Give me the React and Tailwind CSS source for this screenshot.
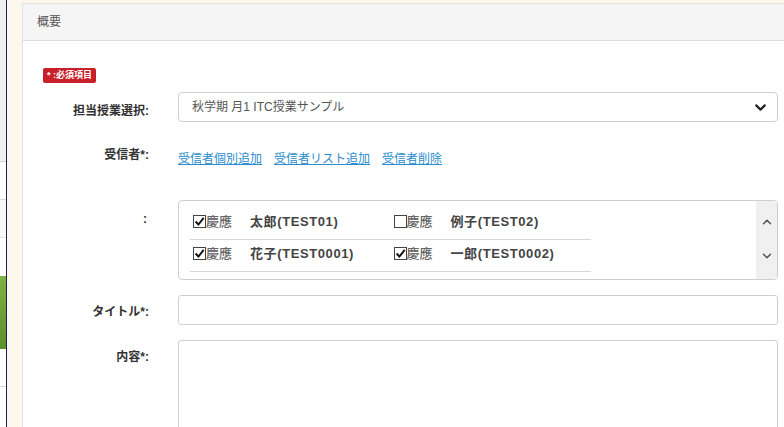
import { ChevronDown, ChevronUp } from 'lucide-react'

const FONT = { fontFamily: '"Liberation Sans", "Noto Sans CJK JP", sans-serif' }

const RECIPIENTS = [
  [
    { checked: true, name: '太郎', id: '(TEST01)' },
    { checked: false, name: '例子', id: '(TEST02)' },
  ],
  [
    { checked: true, name: '花子', id: '(TEST0001)' },
    { checked: true, name: '一郎', id: '(TEST0002)' },
  ],
  [
    { checked: true, name: '次郎', id: '(TEST0003)' },
    { checked: true, name: '三郎', id: '(TEST0004)' },
  ],
]

function CheckBox({ checked }) {
  return (
    <span className="w-[13px] h-[13px] border border-[#444] bg-white flex items-center justify-center flex-shrink-0">
      {checked && (
        <svg width="11" height="11" viewBox="0 0 10 10">
          <path d="M1.5 5 L4 7.8 L8.8 1.8" fill="none" stroke="#111" strokeWidth="1.8" />
        </svg>
      )}
    </span>
  )
}

function Recipient({ r }) {
  return (
    <div className="w-[201px] flex items-center pl-[3px]">
      <CheckBox checked={r.checked} />
      <span className="text-[#666] text-[13px] font-medium">慶應</span>
      <span className="text-[#444] text-[13px] font-bold ml-[18px] tracking-[0.6px]">
        {r.name}{r.id}
      </span>
    </div>
  )
}

function Sidebar() {
  return (
    <div className="w-[6px] flex-shrink-0 flex flex-col bg-white">
      <div className="h-[162px] bg-[#f0f0f0] border-b border-[#d8d8d8]" />
      <div className="h-[38px] border-b border-[#d8d8d8]" />
      <div className="h-[38px] border-b border-[#e0e0e0] bg-[#f7f7f7]" />
      <div className="h-[38px]" />
      <div className="h-[73px] bg-gradient-to-b from-[#7cb342] to-[#5d8f2a]" />
      <div className="h-[38px] border-b border-[#d8d8d8]" />
      <div className="flex-1" />
    </div>
  )
}

export default function App() {
  return (
    <div className="w-[784px] h-[427px] overflow-hidden flex bg-[#fdf8ee]" style={FONT}>
      <Sidebar />
      <div className="w-[1px] bg-[#1c2350] flex-shrink-0" />
      <div className="w-[15px] flex-shrink-0" />

      <div className="flex-1 mt-[3px] bg-white border-l border-t border-[#e2e2e2] flex flex-col min-w-0">
        {/* Header */}
        <div className="h-[37px] bg-[#f5f5f5] border-b border-[#dcdcdc] flex items-center pl-[14px] flex-shrink-0">
          <span className="text-[#555] text-[12px]">概要</span>
        </div>

        <div className="pt-[20px]">
          <div className="ml-[20px] inline-flex items-center h-[15px] px-[4px] rounded-[2px] bg-[#c8202a] text-white text-[9px] font-bold">
            * :必須項目
          </div>

          {/* 担当授業選択 */}
          <div className="flex mt-[7px]">
            <div className="w-[126px] text-right pt-[10px] text-[12px] font-bold text-[#333]">担当授業選択:</div>
            <div className="ml-[29px] w-[600px] h-[30px] border border-[#cfcfcf] rounded-[4px] flex items-center justify-between pl-[13px] pr-[8px]">
              <span className="text-[#555] text-[12px]">秋学期 月1 ITC授業サンプル</span>
              <ChevronDown size={17} strokeWidth={3} className="text-[#222]" />
            </div>
          </div>

          {/* 受信者 */}
          <div className="flex mt-[24px] h-[50px]">
            <div className="w-[126px] text-right text-[12px] font-bold text-[#333]">受信者*:</div>
            <div className="ml-[29px] pt-[4px] flex gap-[12px] text-[12px] text-[#2b8ccf]">
              <span className="underline">受信者個別追加</span>
              <span className="underline">受信者リスト追加</span>
              <span className="underline">受信者削除</span>
            </div>
          </div>

          {/* recipients list */}
          <div className="flex mt-[4px]">
            <div className="w-[126px] text-right pt-[10px] text-[12px] font-bold text-[#333] pr-[2px]">:</div>
            <div className="ml-[29px] w-[600px] h-[80px] border border-[#cfcfcf] rounded-[4px] flex overflow-hidden">
              <div className="flex-1 pl-[11px] pt-[7px] overflow-hidden">
                {RECIPIENTS.map((row, i) => (
                  <div key={i} className="w-[401px] h-[32px] flex items-start pt-[4px] border-b border-[#d6d6d6]">
                    {row.map((r, j) => (
                      <Recipient key={j} r={r} />
                    ))}
                  </div>
                ))}
              </div>
              <div className="w-[21px] bg-[#f0f0f0] flex flex-col items-center pt-[14px]">
                <ChevronUp size={14} strokeWidth={2.6} className="text-[#555]" />
                <ChevronDown size={14} strokeWidth={2.6} className="text-[#555] mt-[20px]" />
              </div>
            </div>
          </div>

          {/* タイトル */}
          <div className="flex mt-[15px]">
            <div className="w-[126px] text-right pt-[8px] text-[12px] font-bold text-[#333]">タイトル*:</div>
            <div className="ml-[29px] w-[600px] h-[30px] border border-[#cfcfcf] rounded-[3px]" />
          </div>

          {/* 内容 */}
          <div className="flex mt-[15px]">
            <div className="w-[126px] text-right pt-[8px] text-[12px] font-bold text-[#333]">内容*:</div>
            <div className="ml-[29px] w-[600px] h-[120px] border border-[#cfcfcf] rounded-[3px]" />
          </div>
        </div>
      </div>
    </div>
  )
}
